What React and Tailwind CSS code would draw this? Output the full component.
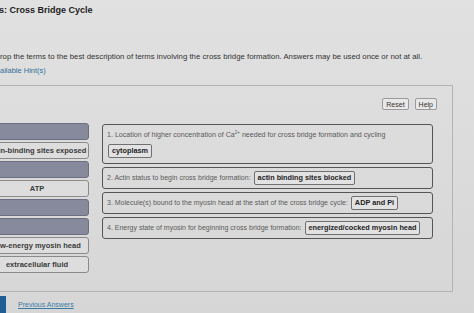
import React from 'react'

const font = { fontFamily: '"Liberation Sans", Arial, sans-serif' }

const pool = [
  { used: true },
  { label: 'actin-binding sites exposed' },
  { used: true },
  { label: 'ATP' },
  { used: true },
  { used: true },
  { label: 'low-energy myosin head' },
  { label: 'extracellular fluid' },
]

function Chip({ children }) {
  return (
    <span className="inline-flex h-[14px] items-center rounded-[2px] border border-[#707070] bg-[#e2e2e2] px-[3px] text-[7.3px] font-bold leading-none text-[#222]">
      {children}
    </span>
  )
}

export default function App() {
  return (
    <div
      style={font}
      className="relative flex h-[313px] w-[474px] flex-col overflow-hidden bg-linear-to-b from-[#e1e1e1] to-[#d6d6d6] text-[#333]"
    >
      {/* title */}
      <div className="-ml-[1px] pt-[4px] text-[9px] font-bold leading-[12px] text-[#222]">
        s: Cross Bridge Cycle
      </div>

      <p className="mt-[36px] whitespace-nowrap text-[7.8px] leading-[9px] text-[#333]">
        rop the terms to the best description of terms involving the cross bridge formation. Answers may be used once or not at all.
      </p>
      <div className="mt-[5px] text-[7.5px] leading-[9px] text-[#2f6f98]">ailable Hint(s)</div>

      {/* activity box */}
      <div className="-ml-[20px] mt-[10px] h-[207px] w-[473px] shrink-0 border border-[#b3b3b3]">
        <div className="flex justify-end gap-[6px] pr-[15px] pt-[12px]">
          <button className="flex h-[12px] items-center rounded-[2px] border border-[#9a9a9a] bg-[#e8e8e8] px-[3px] text-[7px] leading-none text-[#333]">
            Reset
          </button>
          <button className="flex h-[12px] items-center rounded-[2px] border border-[#9a9a9a] bg-[#e8e8e8] px-[3px] text-[7px] leading-none text-[#333]">
            Help
          </button>
        </div>

        <div className="mt-[13px] flex gap-[13px] pl-[4px]">
          {/* draggable pool */}
          <div className="flex w-[104px] flex-col gap-[2px]">
            {pool.map((p, i) =>
              p.used ? (
                <div key={i} className="h-[17px] rounded-[3px] border border-[#6c6f80] bg-[#878a9c]" />
              ) : (
                <div
                  key={i}
                  className="flex h-[17px] items-center justify-center whitespace-nowrap rounded-[3px] border border-[#8a8a8a] bg-[#dddddd] text-[7.5px] font-bold text-[#3a3a3a]"
                >
                  {p.label}
                </div>
              )
            )}
          </div>

          {/* targets */}
          <div className="mt-[1px] flex w-[331px] flex-col gap-[3px]">
            <div className="h-[40px] rounded-[3px] border border-[#555] px-[4px] pt-[6px]">
              <div className="whitespace-nowrap text-[7.1px] leading-[9px] text-[#5a5a5a]">
                1. Location of higher concentration of Ca
                <span className="relative -top-[3px] text-[4.5px] leading-none">2+</span> needed for cross bridge formation and cycling
              </div>
              <div className="mt-[4px] flex pl-[1px]">
                <Chip>cytoplasm</Chip>
              </div>
            </div>
            <div className="flex h-[22px] items-center gap-[3px] rounded-[3px] border border-[#555] px-[4px]">
              <span className="whitespace-nowrap text-[7px] text-[#5a5a5a]">2. Actin status to begin cross bridge formation:</span>
              <Chip>actin binding sites blocked</Chip>
            </div>
            <div className="flex h-[22px] items-center gap-[3px] rounded-[3px] border border-[#555] px-[4px]">
              <span className="whitespace-nowrap text-[7px] text-[#5a5a5a]">
                3. Molecule(s) bound to the myosin head at the start of the cross bridge cycle:
              </span>
              <Chip>ADP and Pi</Chip>
            </div>
            <div className="flex h-[22px] items-center gap-[3px] rounded-[3px] border border-[#555] px-[4px]">
              <span className="whitespace-nowrap text-[7px] text-[#5a5a5a]">4. Energy state of myosin for beginning cross bridge formation:</span>
              <Chip>energized/cocked myosin head</Chip>
            </div>
          </div>
        </div>
      </div>

      {/* footer */}
      <div className="mt-[4px] flex items-center gap-[12px]">
        <div className="h-[18px] w-[6px] bg-[#1f5f94]" />
        <a className="text-[7px] text-[#3a7ba3] underline">Previous Answers</a>
      </div>
    </div>
  )
}
